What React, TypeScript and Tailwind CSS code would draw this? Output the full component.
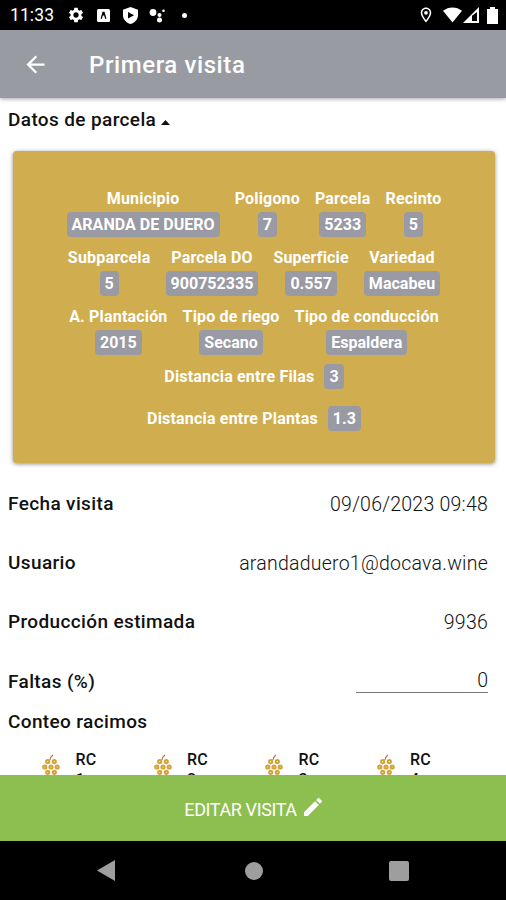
import type { ReactNode } from "react";
import { MdArrowBack, MdEdit, MdSettings, MdOutlineLocationOn } from "react-icons/md";

type Field = { label: string; value: string };

const parcelRows: Field[][] = [
  [
    { label: "Municipio", value: "ARANDA DE DUERO" },
    { label: "Poligono", value: "7" },
    { label: "Parcela", value: "5233" },
    { label: "Recinto", value: "5" },
  ],
  [
    { label: "Subparcela", value: "5" },
    { label: "Parcela DO", value: "900752335" },
    { label: "Superficie", value: "0.557" },
    { label: "Variedad", value: "Macabeu" },
  ],
  [
    { label: "A. Plantación", value: "2015" },
    { label: "Tipo de riego", value: "Secano" },
    { label: "Tipo de conducción", value: "Espaldera" },
  ],
];

function Badge({ children }: { children: ReactNode }) {
  return (
    <span className="flex h-[25px] items-center rounded bg-[#999aa3] px-[5px] leading-none tracking-[0.03px]">
      {children}
    </span>
  );
}

function StatusBar() {
  return (
    <div className="flex h-[30px] shrink-0 items-center bg-black pl-[10px] pr-[7px] text-white">
      <span className="w-[56px] pt-[2px] text-[17.500px] leading-none tracking-[0.1px]">11:33</span>
      <MdSettings className="ml-px size-[18px]" />
      <svg className="ml-[12px] size-[13px]" viewBox="0 0 13 13">
        <rect width="13" height="13" rx="1.5" fill="#fff" />
        <path d="M4.2 9.7 6 3.5h1l1.800 6.200M6.500 3.500v3" fill="none" stroke="#000" strokeWidth="1.300" />
      </svg>
      <svg className="ml-[13px] h-[17px] w-[15px]" viewBox="0 0 15 17">
        <path d="M7.500 0 15 2.800v5.400c0 4-3 7.400-7.500 8.800C3 15.600 0 12.200 0 8.200V2.800z" fill="#fff" />
        <path d="M5 5v6.400L11 8.200z" fill="#000" />
      </svg>
      <svg className="ml-[11px] h-[15px] w-[18px]" viewBox="0 0 18 15" fill="#fff">
        <circle cx="4" cy="4.500" r="3.400" />
        <circle cx="10.500" cy="7" r="2" />
        <circle cx="10.500" cy="12" r="2.500" />
        <circle cx="14.500" cy="2.800" r="1.300" />
      </svg>
      <span className="ml-[15px] size-[5px] rounded-full bg-white" />
      <MdOutlineLocationOn className="ml-auto size-[18px]" />
      <svg className="ml-[8px] h-[16px] w-[19px]" viewBox="0 0 19 16">
        <path d="M0 3.800C5.500-.7 13.500-.7 19 3.800L9.500 15.500z" fill="#fff" />
      </svg>
      <svg className="ml-px h-[16px] w-[16px]" viewBox="0 0 16 16">
        <path fillRule="evenodd" d="M0 16 16 0v16zM9 8.800V14h5V5z" fill="#fff" />
      </svg>
      <svg className="ml-[8px] mr-px h-[17px] w-[11px]" viewBox="0 0 11 17">
        <path d="M3 0h5v2h3v15H0V2h3z" fill="#fff" />
      </svg>
    </div>
  );
}

function Grapes() {
  return (
    <svg className="mt-[5px] h-[25px] w-[18px] shrink-0" viewBox="0 0 18 25" fill="#fff3d0">
      <path d="M8 6C8 3.500 9 2.500 11 1" fill="none" stroke="#b47b3c" strokeWidth="1.300" />
      <g stroke="#d3a136" strokeWidth="2">
        <circle cx="5.700" cy="7.700" r="1.600" />
        <circle cx="12.300" cy="7.700" r="1.600" />
        <circle cx="2.800" cy="13" r="1.600" />
        <circle cx="9" cy="13" r="1.600" />
        <circle cx="15.200" cy="13" r="1.600" />
        <circle cx="5.700" cy="18.300" r="1.600" />
        <circle cx="12.300" cy="18.300" r="1.600" />
        <circle cx="9" cy="23.500" r="1.600" />
      </g>
    </svg>
  );
}

function InfoRow({ label, value }: Field) {
  return (
    <div className="flex h-[59px] items-center justify-between pl-2 pr-[18px]">
      <span className="pt-px text-[19px] font-medium tracking-[0.37px]">{label}</span>
      <span className="pt-[2px] text-[19.500px] font-light tracking-[0.24px]">{value}</span>
    </div>
  );
}

export default function App() {
  return (
    <div className="flex h-[900px] w-[506px] flex-col overflow-hidden bg-white font-['Roboto',sans-serif] text-[#111]">
      <StatusBar />
      <header className="z-10 flex h-[68px] shrink-0 items-center bg-[#999ba3] pl-[22px] text-white shadow-[0_1px_4px_rgba(0,0,0,0.35)]">
        <MdArrowBack className="size-[27px]" />
        <h1 className="ml-[40px] pt-px text-[24px] font-medium tracking-[0.6px]">Primera visita</h1>
      </header>

      <main className="min-h-0 flex-1 overflow-hidden">
        <div className="flex h-[53px] items-center gap-[5px] pb-[8px] pl-2">
          <h2 className="text-[19px] font-medium tracking-[0.37px]">Datos de parcela</h2>
          <svg className="mt-[4px] h-[5px] w-[9px]" viewBox="0 0 9 5">
            <path d="M0 5 4.500 0 9 5z" fill="#111" />
          </svg>
        </div>

        <section className="ml-[13px] h-[312px] w-[482px] rounded bg-[#d0ae50] pt-[37px] text-[16px] font-bold tracking-[0.18px] text-white shadow-[0_1px_4px_rgba(0,0,0,0.45)]">
          {parcelRows.map((row, i) => (
            <div key={i} className="flex h-[59px] justify-center gap-[15px]">
              {row.map((f) => (
                <div key={f.label} className="flex flex-col items-center">
                  <span className="mb-[4px] h-5 whitespace-nowrap leading-[21px]">{f.label}</span>
                  <Badge>{f.value}</Badge>
                </div>
              ))}
            </div>
          ))}
          <div className="mt-[-1px] flex h-[42px] justify-center gap-[10px]">
            <span className="leading-[25px]">Distancia entre Filas</span>
            <Badge>3</Badge>
          </div>
          <div className="flex justify-center gap-[10px]">
            <span className="leading-[25px]">Distancia entre Plantas</span>
            <Badge>1.3</Badge>
          </div>
        </section>

        <div className="mt-[11px]">
          <InfoRow label="Fecha visita" value="09/06/2023 09:48" />
          <InfoRow label="Usuario" value="arandaduero1@docava.wine" />
          <InfoRow label="Producción estimada" value="9936" />
          <div className="flex h-[52px] items-center justify-between pl-2 pr-[18px]">
            <span className="pt-[10px] text-[19px] font-medium tracking-[0.37px]">Faltas (%)</span>
            <span className="mt-[5px] h-[27px] w-[132px] border-b border-[#777] text-right text-[19.500px] font-light leading-[30px]">
              0
            </span>
          </div>
        </div>

        <h2 className="mt-[6px] pl-2 text-[19px] font-medium leading-[26px] tracking-[0.37px]">Conteo racimos</h2>
        <div className="mt-[14px] flex pl-[42px]">
          {["RC 1", "RC 2", "RC 3", "RC 4"].map((name) => (
            <div key={name} className="flex w-[111.500px] shrink-0 items-start">
              <Grapes />
              <span className="ml-[15.500px] mt-px w-[24px] text-[16px] font-medium leading-[20px] tracking-[0.2px]">
                {name}
              </span>
            </div>
          ))}
        </div>
      </main>

      <button className="flex h-[66px] shrink-0 items-center justify-center gap-[4px] bg-[#8dbe50] pl-[3px] pt-[2px] text-[18px] text-white">
        <span className="tracking-[-0.4px]">EDITAR VISITA</span>
        <MdEdit className="size-[24px] -translate-y-[2px]" />
      </button>
      <nav className="flex h-[59px] shrink-0 items-center bg-black pl-[97px]">
        <svg className="h-[21px] w-[18px]" viewBox="0 0 18 21">
          <path d="M0 10.500 18 0v21z" fill="#9e9e9e" />
        </svg>
        <span className="ml-[130px] size-[18px] rounded-full bg-[#9e9e9e]" />
        <span className="ml-[126px] size-[20px] rounded-[2px] bg-[#9e9e9e]" />
      </nav>
    </div>
  );
}
